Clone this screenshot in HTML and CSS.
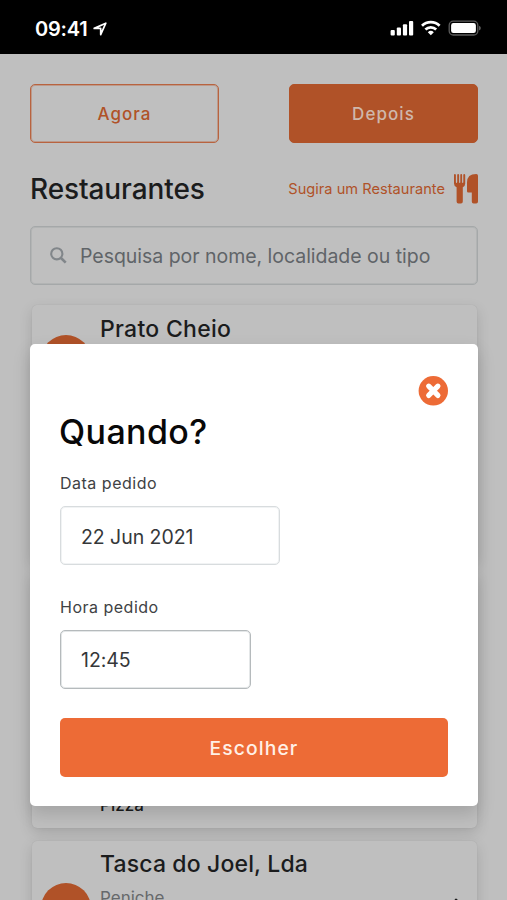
FILE: index.html
```html
<!DOCTYPE html>
<html lang="pt">
<head>
<meta charset="utf-8">
<title>Restaurantes</title>
<link rel="stylesheet" href="styles.css">
</head>
<body>
<header class="status">
  <div class="clock"><span>09:41</span>
    <svg width="14" height="14" viewBox="0 0 14 14"><path d="M1.2 6.4 12.8 1.2 7.7 12.6V6.4Z" fill="none" stroke="#fff" stroke-width="1.7" stroke-linejoin="round"/></svg>
  </div>
  <svg class="signals" width="91" height="16" viewBox="0 0 91 16">
    <g fill="#fff"><rect x="0.6" y="10" width="4.2" height="5.5" rx="1"/><rect x="6.8" y="7.5" width="4.2" height="8" rx="1"/><rect x="12.9" y="4.3" width="4.2" height="11.2" rx="1"/><rect x="19" y="1" width="4.2" height="14.5" rx="1"/></g>
    <g fill="none" stroke="#fff" stroke-width="2.7"><path d="M32 5.7a12.5 12.5 0 0 1 17.6 0"/><path d="M35.4 9.5a7.7 7.7 0 0 1 10.8 0"/></g>
    <path d="M40.8 15.3 37.8 12.2a4.3 4.3 0 0 1 6 0Z" fill="#fff"/>
    <rect x="59.2" y="1.2" width="28.6" height="13.8" rx="4" fill="none" stroke="#5c5c5c" stroke-width="1.3"/>
    <rect x="61.1" y="3.1" width="24.8" height="10" rx="2.3" fill="#fff"/>
    <path d="M89 5.7q1.9.8 1.9 2.4t-1.9 2.4Z" fill="#5c5c5c"/>
  </svg>
</header>
<main class="page">
  <div class="tabs"><button class="tab">Agora</button><button class="tab tab-active">Depois</button></div>
  <div class="heading">
    <h1>Restaurantes</h1>
    <a class="suggest"><span>Sugira um Restaurante</span>
      <svg width="24" height="30" viewBox="0 0 24 30" fill="currentColor"><path d="M0 1Q0 0 .9 0T1.9 1V8Q1.9 8.9 2.5 8.9T3.2 8V1Q3.2 0 4.1 0T5.1 1V8Q5.1 8.9 5.7 8.9T6.3 8V1Q6.3 0 7.2 0T8.1 1V8Q8.1 8.9 8.7 8.9T9.3 8V1Q9.3 0 10.2 0T11.2 1V9.5Q11.2 12.2 8.8 13.3V27.5Q8.8 29.4 7 29.4H4.4Q2.6 29.4 2.6 27.5V13.3Q0 12.2 0 9.5Z"/><path d="M22.3 0Q24 0 24 1.7V27.5Q24 29.4 22.2 29.4H19.6Q17.8 29.4 17.8 27.5V18.6H14.2Q13 18.6 13 17.3V8.4Q13 0 22.3 0Z"/></svg>
    </a>
  </div>
  <div class="search">
    <svg width="17" height="17" viewBox="0 0 17 17" fill="none" stroke="currentColor"><circle cx="6.8" cy="6.8" r="5.6" stroke-width="2.1"/><path d="m11 11 4.7 4.7" stroke-width="2.6"/></svg>
    <span>Pesquisa por nome, localidade ou tipo</span>
  </div>
  <div class="cards">
    <article class="card card-tall"><i class="avatar avatar-high"></i><h2 class="lead">Prato Cheio</h2></article>
    <article class="card card-tall card-end"><p class="kind">Pizza</p></article>
    <article class="card">
      <i class="avatar"></i>
      <div class="info"><h2>Tasca do Joel, Lda</h2><p class="place">Peniche</p></div>
      <svg class="more" width="10" height="14" viewBox="0 0 10 14"><path d="m5 2 5 5-5 5" fill="none" stroke="#1b1c1d" stroke-width="2.6" stroke-linecap="round"/></svg>
    </article>
  </div>
</main>
<section class="modal">
  <svg class="close" width="30" height="30" viewBox="0 0 30 30"><circle cx="15.3" cy="14.8" r="14.7" fill="#ed6b36"/><path d="m10.7 10.2 9.2 9.2m0-9.2-9.2 9.2" stroke="#fff" stroke-width="5.2" stroke-linecap="round"/></svg>
  <h3>Quando?</h3>
  <label>Data pedido</label>
  <div class="field date">22 Jun 2021</div>
  <label class="second">Hora pedido</label>
  <div class="field time">12:45</div>
  <button class="choose">Escolher</button>
</section>
</body>
</html>
```
FILE: styles.css
```css
* { box-sizing: border-box; margin: 0; padding: 0; }
body { width: 507px; height: 900px; overflow: hidden; background: #bfbfbf; color: #1b1c1d; font-family: Inter, "Liberation Sans", sans-serif; }
button { font: inherit; }
svg { display: block; flex: none; }
.status { height: 54px; background: #000; color: #fff; display: flex; justify-content: space-between; padding: 0 26px 0 35px; }
.clock { display: flex; gap: 5px; height: 57px; align-items: center; font-size: 20px; font-weight: 600; letter-spacing: -.2px; }
.signals { margin-top: 20px; }
.page { padding: 30px 29px 0 30px; height: 846px; overflow: hidden; }
.tabs { display: flex; justify-content: space-between; }
.tab { width: 189px; height: 59px; border: 1px solid #b8633f; box-shadow: inset 0 0 0 1px rgba(184,99,63,.4); border-radius: 5px; background: none; color: #b05228; font-size: 17px; font-weight: 500; letter-spacing: 1.05px; }
.tab-active { background: #b05228; border-color: #b05228; color: #cfb7ab; box-shadow: none; }
.heading { height: 83px; padding-top: 9px; display: flex; justify-content: space-between; align-items: center; }
h1 { font-size: 28px; line-height: 34px; font-weight: 450; letter-spacing: -.1px; }
.suggest { display: flex; align-items: center; gap: 9px; color: #b05228; font-size: 14.6px; letter-spacing: .02px; }
.search { height: 59px; border: 1px solid #a5a8a9; box-shadow: inset 0 0 0 1px rgba(150,154,156,.3); border-radius: 5px; display: flex; align-items: center; gap: 13px; padding-left: 19px; color: #606468; font-size: 19.5px; letter-spacing: -.03px; }
.search svg { color: #81868a; }
.cards { display: flex; flex-direction: column; gap: 13px; margin: 20px 1px 0 2px; }
.card { height: 160px; display: flex; padding: 7px 16px 0 9px; background: #bfbfbf; border-radius: 5px; box-shadow: 0 5px 14px rgba(0,0,0,.14), 0 0 1px rgba(0,0,0,.12); }
.card-tall { height: 255px; }
.card-end { align-items: flex-end; padding: 0 0 12px 68px; }
.avatar { width: 50px; height: 50px; border-radius: 50%; background: #b05228; margin: 35px 9px 0 0; flex: none; }
.avatar-high { margin-top: 23px; }
h2 { font-size: 23px; line-height: 33px; font-weight: 450; letter-spacing: .15px; }
.lead { line-height: 34px; letter-spacing: .28px; }
.info { flex: 1; }
.place { font-size: 17px; line-height: 24px; margin-top: 5px; color: #66696b; }
.kind { font-size: 17px; line-height: 22px; font-weight: 450; }
.more { margin-top: 50px; }
.modal { position: absolute; left: 30px; top: 344px; width: 448px; height: 462px; background: #fff; border-radius: 5px; padding: 32px 30px 0; display: flex; flex-direction: column; align-items: flex-start; box-shadow: 0 8px 18px rgba(0,0,0,.15); }
.close { align-self: flex-end; }
h3 { color: #080808; font-size: 34px; line-height: 46px; font-weight: 500; letter-spacing: .4px; margin: 3px 0 0 -1px; }
label { font-size: 16px; line-height: 24px; letter-spacing: .5px; color: #404244; margin: 16px 0 11px; }
label.second { margin: 30px 0 11px; }
.field { height: 59px; border: 1px solid #d8dcde; box-shadow: inset 0 0 0 1px #f1f3f4; border-radius: 5px; padding-left: 20px; display: flex; align-items: center; font-size: 19.5px; letter-spacing: -.05px; color: #353739; }
.date { width: 220px; padding-top: 2px; }
.time { width: 191px; border-color: #b5babc; box-shadow: inset 0 0 0 1px #e4e7e8; }
.choose { width: 388px; height: 59px; margin-top: 29px; border: 0; border-radius: 5px; background: #ed6b36; color: #fff0e6; font-size: 19.3px; font-weight: 500; letter-spacing: 1.1px; }
```
